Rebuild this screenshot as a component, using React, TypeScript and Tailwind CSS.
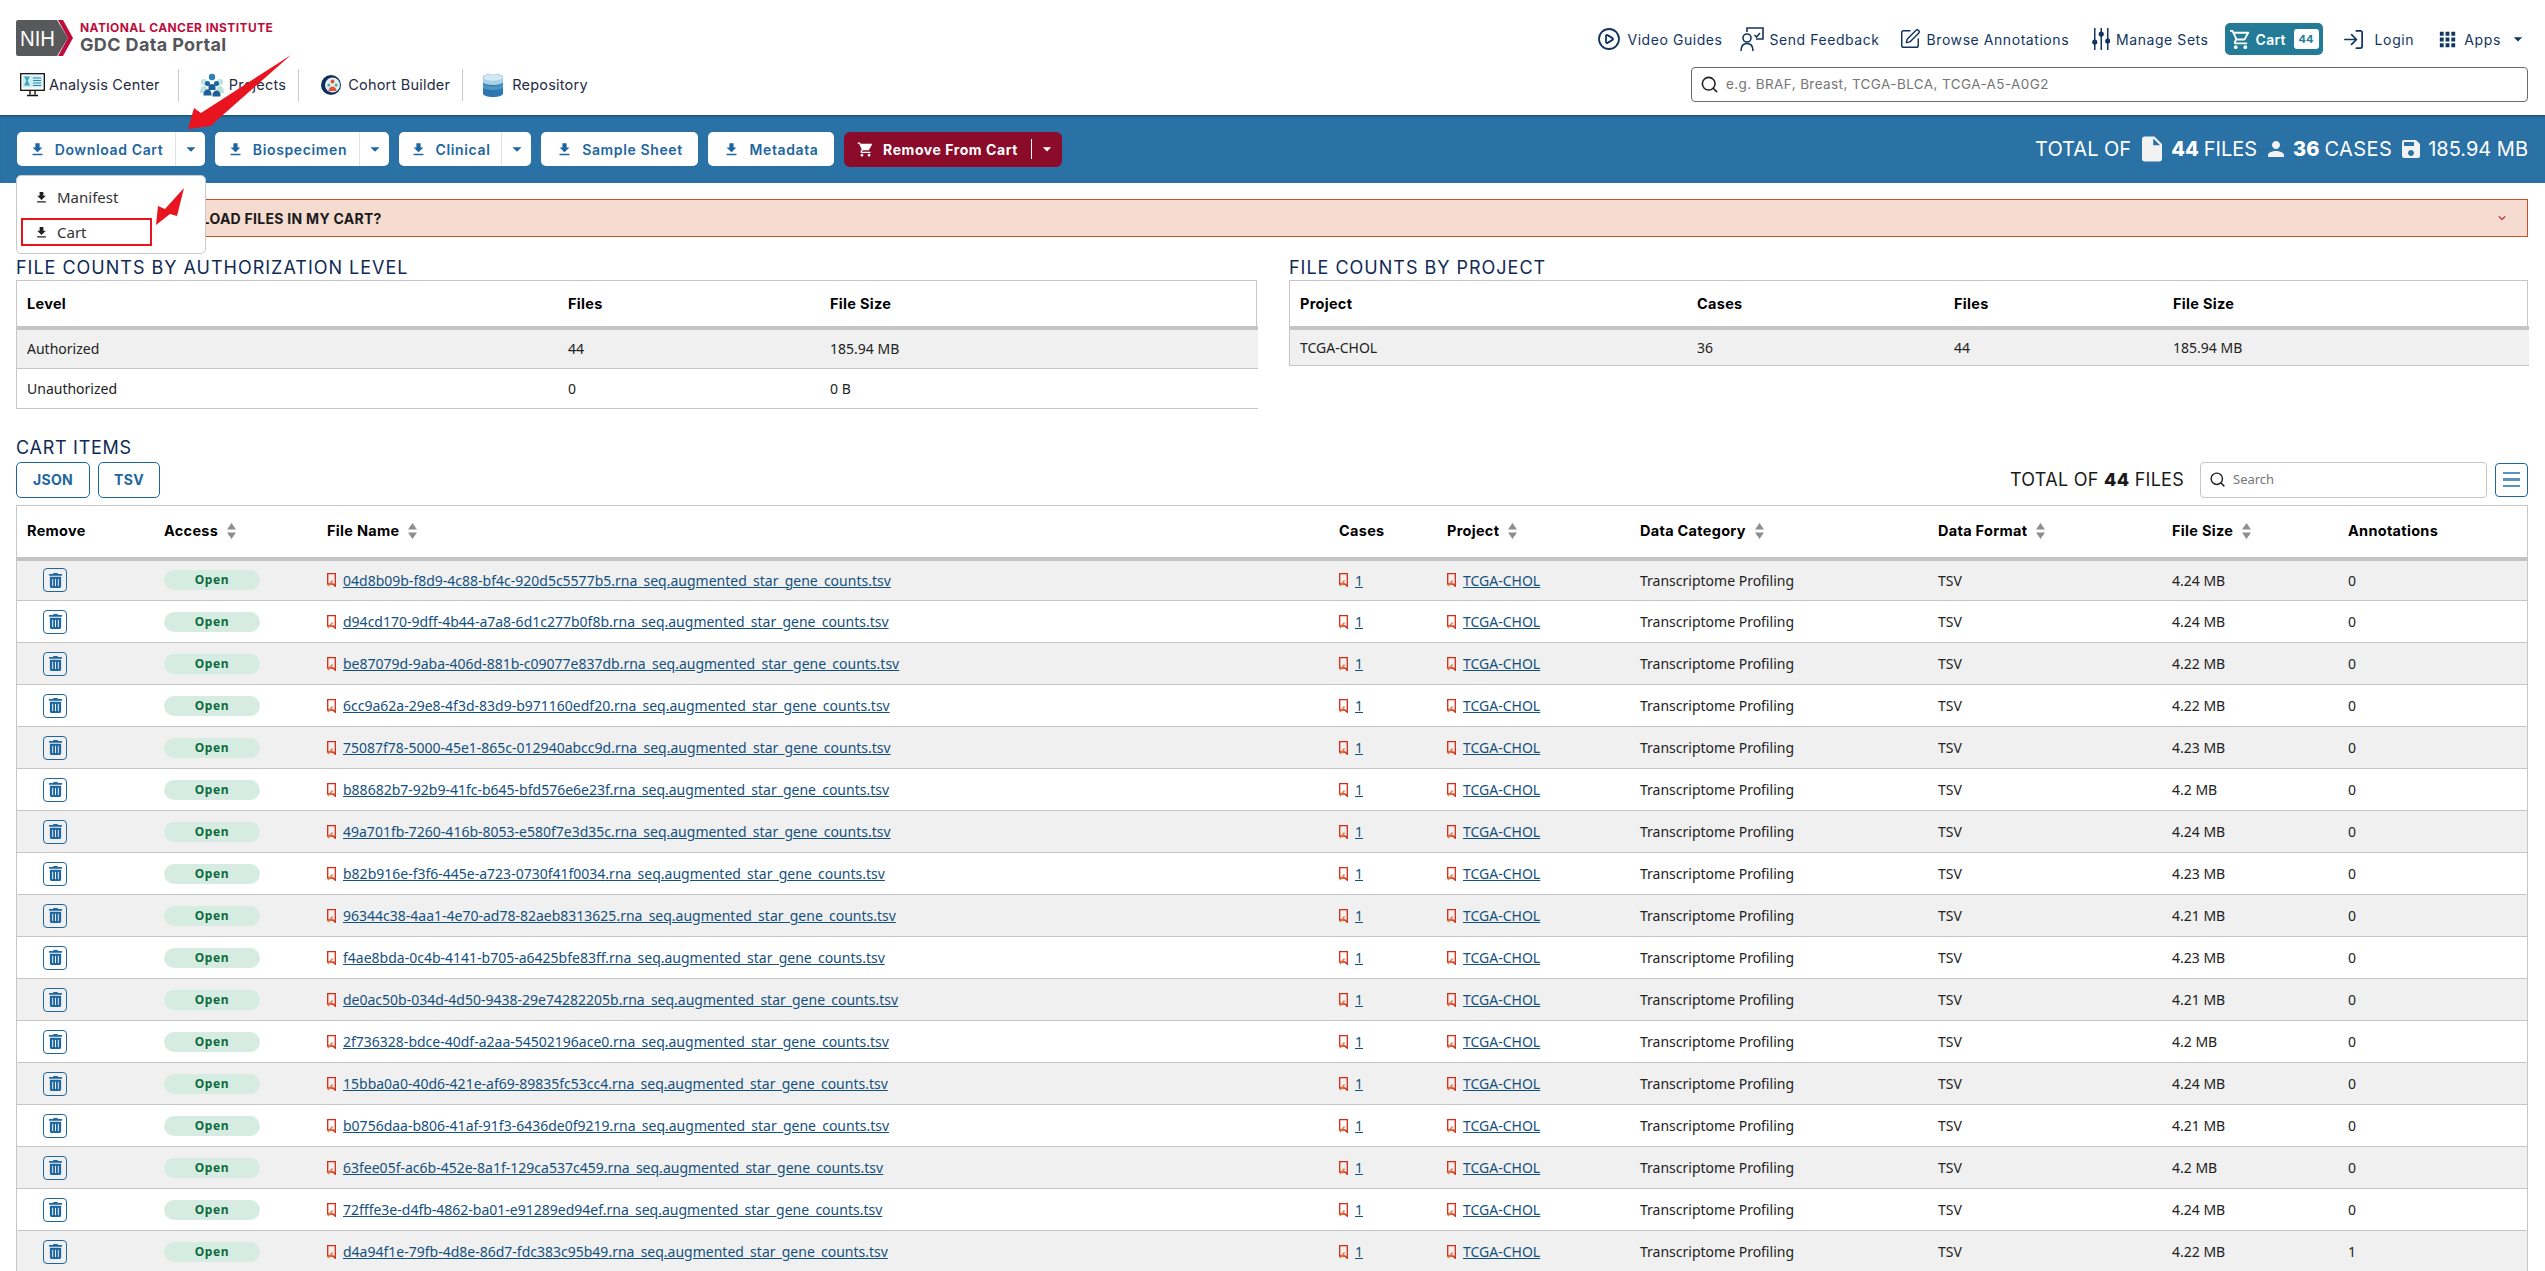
import React from "react";
import { Search, LogIn, SquarePen, CirclePlay } from "lucide-react";
import { MdFileDownload, MdArrowDropDown, MdInsertDriveFile, MdPerson, MdSave, MdApps, MdShoppingCart, MdOutlineShoppingCart, MdExpandMore } from "react-icons/md";
import { FaTrashAlt } from "react-icons/fa";

const HF = "font-['Inter',sans-serif]";

const rows: [string, string, string][] = [
  ["04d8b09b-f8d9-4c88-bf4c-920d5c5577b5", "4.24 MB", "0"],
  ["d94cd170-9dff-4b44-a7a8-6d1c277b0f8b", "4.24 MB", "0"],
  ["be87079d-9aba-406d-881b-c09077e837db", "4.22 MB", "0"],
  ["6cc9a62a-29e8-4f3d-83d9-b971160edf20", "4.22 MB", "0"],
  ["75087f78-5000-45e1-865c-012940abcc9d", "4.23 MB", "0"],
  ["b88682b7-92b9-41fc-b645-bfd576e6e23f", "4.2 MB", "0"],
  ["49a701fb-7260-416b-8053-e580f7e3d35c", "4.24 MB", "0"],
  ["b82b916e-f3f6-445e-a723-0730f41f0034", "4.23 MB", "0"],
  ["96344c38-4aa1-4e70-ad78-82aeb8313625", "4.21 MB", "0"],
  ["f4ae8bda-0c4b-4141-b705-a6425bfe83ff", "4.23 MB", "0"],
  ["de0ac50b-034d-4d50-9438-29e74282205b", "4.21 MB", "0"],
  ["2f736328-bdce-40df-a2aa-54502196ace0", "4.2 MB", "0"],
  ["15bba0a0-40d6-421e-af69-89835fc53cc4", "4.24 MB", "0"],
  ["b0756daa-b806-41af-91f3-6436de0f9219", "4.21 MB", "0"],
  ["63fee05f-ac6b-452e-8a1f-129ca537c459", "4.2 MB", "0"],
  ["72fffe3e-d4fb-4862-ba01-e91289ed94ef", "4.24 MB", "0"],
  ["d4a94f1e-79fb-4d8e-86d7-fdc383c95b49", "4.22 MB", "1"],
];

function NihLogo() {
  return (
    <svg width="57" height="36" viewBox="0 0 57 36" className="shrink-0">
      <path d="M2 0H41L52 18L41 36H2C1 36 0 35 0 34V2C0 1 1 0 2 0Z" fill="#58595b" />
      <path d="M42 0H47L57 18L47 36H42L52 18Z" fill="#bb0e3d" />
      <text x="4" y="26" fill="#fff" fontSize="22" fontFamily="Liberation Sans, sans-serif" textLength="35" lengthAdjust="spacingAndGlyphs">NIH</text>
    </svg>
  );
}

function AnalysisIcon() {
  return (
    <svg width="25" height="24" viewBox="0 0 25 24" className="shrink-0">
      <rect x="0.7" y="0.7" width="23.6" height="16.6" fill="#fff" stroke="#111" strokeWidth="1.3" />
      <rect x="2.5" y="2.5" width="20" height="12" fill="#cfeef0" />
      <path d="M4 3.5h6l-2.3 4.2L10 12.5H4l2.3-4.8Z" fill="#3aa4c4" />
      <path d="M13 5h8M13 7.5h8M13 10h8M13 12.5h8" stroke="#2e86b4" strokeWidth="1.2" />
      <path d="M10 17.5v4M15 17.5v4M7 22.5h11" stroke="#111" strokeWidth="1.4" />
    </svg>
  );
}

function ProjectsIcon() {
  return (
    <svg width="24" height="25" viewBox="0 0 24 25" className="shrink-0">
      <circle cx="4" cy="9" r="3" fill="#b9e4df" />
      <circle cx="20" cy="9" r="3" fill="#b9e4df" />
      <path d="M0 20c0-5 2-7 4-7s4 2 4 7ZM16 20c0-5 2-7 4-7s4 2 4 7Z" fill="#b9e4df" />
      <circle cx="12" cy="4" r="3.2" fill="#2d7fb5" />
      <circle cx="7.5" cy="10.5" r="2.6" fill="#1f6aa3" />
      <circle cx="16.5" cy="10.5" r="2.6" fill="#1f6aa3" />
      <path d="M8.5 14c0-4 7-4 7 0v3h-7ZM3.5 22c0-7 8-7 8-1v1.500h-8ZM12.500 22c0-6 8-6 8 0v1.500h-8Z" fill="#1b5f96" />
    </svg>
  );
}

function CohortIcon() {
  return (
    <svg width="20" height="20" viewBox="0 0 20 20" className="shrink-0">
      <circle cx="10" cy="10" r="10" fill="#0f2f5a" />
      <circle cx="11.500" cy="10" r="7.500" fill="#dff1f6" />
      <circle cx="11.500" cy="6.500" r="2" fill="#e5553b" />
      <circle cx="7.800" cy="10" r="1.500" fill="#4fae8e" />
      <circle cx="15.200" cy="10" r="1.500" fill="#4fae8e" />
      <path d="M7.500 16c0-6 8-6 8 0Z" fill="#e5553b" />
    </svg>
  );
}

function RepoIcon() {
  return (
    <svg width="20" height="23" viewBox="0 0 20 23" className="shrink-0">
      <path d="M0 3.500C0 1.500 4.500 0 10 0s10 1.500 10 3.500v16c0 2-4.500 3.500-10 3.500S0 21.500 0 19.500Z" fill="#2c77ad" />
      <path d="M0 3.500C0 1.500 4.500 0 10 0s10 1.500 10 3.500V8c0 2-4.500 3-10 3S0 10 0 8Z" fill="#a9d1e6" />
      <path d="M0 9c0 2 4.500 3 10 3s10-1 10-3v4c0 2-4.500 3-10 3S0 15 0 13Z" fill="#4d96c4" />
      <ellipse cx="10" cy="3.500" rx="9.500" ry="3.200" fill="#d2e8f2" />
    </svg>
  );
}

function FeedbackIcon() {
  return (
    <svg width="24" height="24" viewBox="0 0 24 24" fill="none" stroke="#12355f" strokeWidth="1.600" className="shrink-0">
      <circle cx="7" cy="11" r="4" />
      <path d="M1 24c0-5 2.500-7.500 6-7.500s6 2.500 6 7.500" />
      <path d="M7 5V1h16v11h-7" />
      <path d="m14.500 8 2 2 3.500-4" />
    </svg>
  );
}

function SetsIcon() {
  return (
    <svg width="18" height="22" viewBox="0 0 18 22" fill="#12355f" className="shrink-0">
      <rect x="2" y="0" width="1.500" height="22" />
      <rect x="8.500" y="0" width="1.500" height="22" />
      <rect x="15" y="0" width="1.500" height="22" />
      <circle cx="2.750" cy="14" r="2.600" />
      <circle cx="9.250" cy="6" r="2.600" />
      <circle cx="15.750" cy="13" r="2.600" />
    </svg>
  );
}

function SortIcon() {
  return (
    <svg width="9" height="16" viewBox="0 0 9 16" fill="#8f8f8f" className="ml-[9px] shrink-0">
      <path d="M4.500 0 9 6.500H0ZM4.500 16 0 9.500h9Z" />
    </svg>
  );
}

function DocMark() {
  return (
    <svg width="9" height="14" viewBox="0 0 9 14" fill="none" className="shrink-0">
      <path d="M.7.7h7.600v12.600L6 11H.7Z" stroke="#d42a12" strokeWidth="1.300" />
      <path d="M1 13 5.500 7.500" stroke="#e8743a" strokeWidth="1.400" />
    </svg>
  );
}

function Btn({ label, w, split }: { label: string; w: string; split?: boolean }) {
  return (
    <button className={`${w} h-[34px] flex items-center rounded-[5px] bg-white text-[#1d66a0] text-[14px] font-semibold ${HF}`}>
      <span className="flex-1 flex items-center justify-center gap-[9px] tracking-[0.045em]">
        <MdFileDownload size={17} color="#1d66a0" />
        {label}
      </span>
      {split && (
        <span className="h-full w-[30px] border-l border-[#e3e3e3] flex items-center justify-center">
          <MdArrowDropDown size={22} color="#1d66a0" />
        </span>
      )}
    </button>
  );
}

function NavTop({ icon, label, cls = "" }: { icon: React.ReactNode; label: string; cls?: string }) {
  return (
    <a className={`flex items-center gap-[6px] text-[14px] text-[#12355f] tracking-[0.04em] ${cls} ${HF}`}>
      {icon}
      {label}
    </a>
  );
}

function NavLow({ icon, label, gap }: { icon: React.ReactNode; label: string; gap: string }) {
  return (
    <a className={`flex items-center ${gap} text-[14.5px] text-[#1f2a44] tracking-[0.015em] ${HF}`}>
      {icon}
      {label}
    </a>
  );
}

function Th({ children, sort }: { children: React.ReactNode; sort?: boolean }) {
  return (
    <th className="px-[10px] text-left font-normal">
      <span className={`flex items-center text-[14.500px] font-bold text-black tracking-[0.02em] ${HF}`}>
        {children}
        {sort && <SortIcon />}
      </span>
    </th>
  );
}

function SummaryTable({ heads, rowsData, cols, rowH }: { heads: string[]; rowsData: string[][]; cols: string[]; rowH: string }) {
  return (
    <div className="border border-[#c6c6c6] border-b-0">
      <table className="w-full table-fixed border-collapse">
        <colgroup>
          {cols.map((c) => (
            <col key={c} className={c} />
          ))}
        </colgroup>
        <thead>
          <tr className="h-[47px] border-b-4 border-[#c4c4c4]">
            {heads.map((h) => (
              <Th key={h}>{h}</Th>
            ))}
          </tr>
        </thead>
        <tbody>
          {rowsData.map((r, i) => (
            <tr key={i} className={`${rowH} border-b border-[#c6c6c6] ${i % 2 === 0 ? "bg-[#f0f0f0]" : "bg-white"}`}>
              {r.map((c, j) => (
                <td key={j} className="px-[10px] text-[14px] text-[#222]">
                  {c}
                </td>
              ))}
            </tr>
          ))}
        </tbody>
      </table>
    </div>
  );
}

function CartRow({ name, size, ann, odd }: { name: string; size: string; ann: string; odd: boolean }) {
  return (
    <tr className={`h-[42px] border-b border-[#c6c6c6] text-[14px] text-[#222] ${odd ? "bg-[#f0f0f0]" : "bg-white"}`}>
      <td className="pl-[26px]">
        <button className="w-[24px] h-[24px] rounded-[4px] border border-[#1d66a0] flex items-center justify-center">
          <FaTrashAlt size={15} color="#1d66a0" />
        </button>
      </td>
      <td className="px-[10px]">
        <span className="w-[96px] h-[20px] rounded-full bg-[#d6ece3] flex items-center justify-center text-[12px] font-bold tracking-[0.05em] text-[#0b6b3b]">
          Open
        </span>
      </td>
      <td className="px-[10px]">
        <span className="flex items-center gap-[7px]">
          <DocMark />
          <a className="underline text-[#14507e]">{name}.rna_seq.augmented_star_gene_counts.tsv</a>
        </span>
      </td>
      <td className="px-[10px]">
        <span className="flex items-center gap-[7px]">
          <DocMark />
          <a className="underline text-[#14507e]">1</a>
        </span>
      </td>
      <td className="px-[10px]">
        <span className="flex items-center gap-[7px]">
          <DocMark />
          <a className="underline text-[#14507e]">TCGA-CHOL</a>
        </span>
      </td>
      <td className="px-[10px]">Transcriptome Profiling</td>
      <td className="px-[10px]">TSV</td>
      <td className="px-[10px]">{size}</td>
      <td className="px-[10px]">{ann}</td>
    </tr>
  );
}

export default function App() {
  return (
    <div className="relative h-[1271px] overflow-hidden bg-white font-['Noto_Sans',sans-serif]">
      <header className="h-[115px] flex justify-between pl-[16px] pr-[17px]">
        <div className="flex flex-col">
          <div className="flex items-center gap-[7px] pt-[20px]">
            <NihLogo />
            <div className={`flex flex-col ${HF}`}>
              <span className="text-[12px] leading-[14px] font-bold tracking-[0.035em] text-[#bb0e3d]">NATIONAL CANCER INSTITUTE</span>
              <span className="text-[18px] leading-[20px] font-bold tracking-[0.02em] text-[#55565a]">GDC Data Portal</span>
            </div>
          </div>
          <nav className="flex items-center h-[32px] mt-[13px] pl-[4px]">
            <NavLow icon={<AnalysisIcon />} label="Analysis Center" gap="gap-[4px]" />
            <span className="w-px h-[32px] bg-[#c9c9c9] ml-[18px] mr-[21px]" />
            <NavLow icon={<ProjectsIcon />} label="Projects" gap="gap-[5px]" />
            <span className="w-px h-[32px] bg-[#c9c9c9] ml-[12px] mr-[22px]" />
            <NavLow icon={<CohortIcon />} label="Cohort Builder" gap="gap-[7px]" />
            <span className="w-px h-[32px] bg-[#c9c9c9] ml-[12px] mr-[20px]" />
            <NavLow icon={<RepoIcon />} label="Repository" gap="gap-[9px]" />
          </nav>
        </div>
        <div className="flex flex-col items-end">
          <div className="flex items-center h-[32px] mt-[23px]">
            <div className="flex items-center gap-[19px]">
              <NavTop icon={<CirclePlay size={24} color="#12355f" strokeWidth={1.800} />} label="Video Guides" />
              <NavTop icon={<FeedbackIcon />} label="Send Feedback" cls="ml-[-2px]" />
              <NavTop icon={<SquarePen size={22} color="#12355f" strokeWidth={1.600} />} label="Browse Annotations" />
              <NavTop icon={<SetsIcon />} label="Manage Sets" cls="ml-[4px]" />
            </div>
            <a className={`ml-[16px] w-[98px] h-[32px] rounded-[5px] bg-[#237b98] flex items-center pl-[4px] text-white text-[14px] font-semibold ${HF}`}>
              <MdOutlineShoppingCart size={23} color="#fff" />
              <span className="ml-[4px] tracking-[0.02em]">Cart</span>
              <span className="ml-auto mr-[4px] w-[25px] h-[20px] bg-white rounded-[3px] text-[#237b98] text-[11px] font-bold flex items-center justify-center">44</span>
            </a>
            <a className={`ml-[19px] flex items-center gap-[10px] text-[14px] text-[#12355f] tracking-[0.045em] ${HF}`}>
              <LogIn size={23} color="#12355f" strokeWidth={1.800} />
              Login
            </a>
            <a className={`ml-[22px] flex items-center gap-[5px] text-[14px] text-[#12355f] tracking-[0.045em] ${HF}`}>
              <MdApps size={23} color="#12355f" />
              Apps
              <MdArrowDropDown size={20} color="#12355f" className="ml-[2px]" />
            </a>
          </div>
          <div className="mt-[12px] w-[837px] h-[35px] rounded-[4px] border border-[#6b6b6b] flex items-center pl-[8px] gap-[7px]">
            <Search size={19} color="#222" strokeWidth={2} />
            <span className={`text-[13.500px] text-[#757575] tracking-[0.03em] ${HF}`}>e.g. BRAF, Breast, TCGA-BLCA, TCGA-A5-A0G2</span>
          </div>
        </div>
      </header>

      <div className="h-[68px] bg-[#2a71a5] shadow-[inset_0_3px_3px_-2px_rgba(0,0,0,0.35)] flex items-center justify-between pl-[17px] pr-[17px]">
        <div className="flex items-center gap-[10px]">
          <Btn label="Download Cart" w="w-[188px]" split />
          <Btn label="Biospecimen" w="w-[174px]" split />
          <Btn label="Clinical" w="w-[132px]" split />
          <Btn label="Sample Sheet" w="w-[157px]" />
          <Btn label="Metadata" w="w-[126px]" />
          <button className={`w-[218px] h-[35px] flex items-center rounded-[6px] bg-[#8a0c2a] text-white text-[14px] font-bold ${HF}`}>
            <span className="flex-1 flex items-center justify-center gap-[9px] tracking-[0.04em]">
              <MdShoppingCart size={17} color="#fff" />
              Remove From Cart
            </span>
            <span className="h-[20px] w-[31px] border-l border-white flex items-center justify-center">
              <MdArrowDropDown size={20} color="#fff" />
            </span>
          </button>
        </div>
        <div className={`flex items-center text-white text-[20px] ${HF}`}>
          <span>TOTAL OF</span>
          <MdInsertDriveFile size={30} color="#f2f2f2" className="ml-[6px]" />
          <b className="ml-[4px] font-extrabold">44</b>
          <span className="ml-[5px]">FILES</span>
          <MdPerson size={24} color="#f2f2f2" className="ml-[7px]" />
          <b className="ml-[5px] font-extrabold">36</b>
          <span className="ml-[5px] tracking-[0.02em]">CASES</span>
          <MdSave size={24} color="#f2f2f2" className="ml-[7px]" />
          <span className="ml-[5px]">185.94 MB</span>
        </div>
      </div>

      <div className="pl-[16px] pr-[17px]">
        <div className="mt-[16px] h-[38px] bg-[#f5dbd0] border border-[#c8502a] flex items-center justify-between pl-[65px] pr-[18px]">
          <span className={`text-[14px] font-bold text-[#1a1a1a] tracking-[0.02em] ${HF}`}>HOW DO I DOWNLOAD FILES IN MY CART?</span>
          <MdExpandMore size={14} color="#c01f1f" />
        </div>

        <div className="grid grid-cols-[1241px_1239px] gap-[32px] mt-[18px]">
          <div>
            <h2 className={`text-[18px] leading-[25px] text-[#0f2a54] tracking-[0.055em] ${HF}`}>FILE COUNTS BY AUTHORIZATION LEVEL</h2>
            <SummaryTable
              heads={["Level", "Files", "File Size"]}
              cols={["w-[541px]", "w-[262px]", "w-[438px]"]}
              rowH="h-[40px]"
              rowsData={[["Authorized", "44", "185.94 MB"], ["Unauthorized", "0", "0 B"]]}
            />
          </div>
          <div>
            <h2 className={`text-[18px] leading-[25px] text-[#0f2a54] tracking-[0.055em] ${HF}`}>FILE COUNTS BY PROJECT</h2>
            <SummaryTable
              heads={["Project", "Cases", "Files", "File Size"]}
              cols={["w-[397px]", "w-[257px]", "w-[219px]", "w-[366px]"]}
              rowH="h-[37px]"
              rowsData={[["TCGA-CHOL", "36", "44", "185.94 MB"]]}
            />
          </div>
        </div>

        <h2 className={`mt-[26px] text-[18px] leading-[25px] text-[#0f2a54] tracking-[0.04em] ${HF}`}>CART ITEMS</h2>
        <div className="flex items-center justify-between mt-[2px]">
          <div className={`flex gap-[8px] text-[14px] font-bold text-[#1d66a0] tracking-[0.02em] ${HF}`}>
            <button className="w-[74px] h-[36px] rounded-[5px] border border-[#1d66a0]">JSON</button>
            <button className="w-[62px] h-[36px] rounded-[5px] border border-[#1d66a0]">TSV</button>
          </div>
          <div className="flex items-center">
            <span className={`text-[18px] text-[#1a1a1a] tracking-[0.015em] ${HF}`}>
              TOTAL OF <b className="font-extrabold">44</b> FILES
            </span>
            <div className="ml-[16px] w-[287px] h-[36px] rounded-[4px] border border-[#c6c6c6] flex items-center pl-[8px] gap-[7px]">
              <Search size={17} color="#222" strokeWidth={2} />
              <span className="text-[13px] text-[#767676]">Search</span>
            </div>
            <button className="ml-[8px] w-[33px] h-[34px] rounded-[4px] border border-[#1d66a0] flex flex-col items-center justify-center gap-[4px]">
              <span className="w-[17px] h-[2.500px] bg-[#5a93bb]" />
              <span className="w-[17px] h-[2.500px] bg-[#5a93bb]" />
              <span className="w-[17px] h-[2.500px] bg-[#5a93bb]" />
            </button>
          </div>
        </div>

        <div className="mt-[7px] border border-[#c6c6c6] border-b-0">
          <table className="w-full table-fixed border-collapse">
            <colgroup>
              <col className="w-[137px]" />
              <col className="w-[163px]" />
              <col className="w-[1012px]" />
              <col className="w-[108px]" />
              <col className="w-[193px]" />
              <col className="w-[298px]" />
              <col className="w-[234px]" />
              <col className="w-[176px]" />
              <col className="w-[189px]" />
            </colgroup>
            <thead>
              <tr className="h-[53px] border-b-4 border-[#c4c4c4]">
                <Th>Remove</Th>
                <Th sort>Access</Th>
                <Th sort>File Name</Th>
                <Th>Cases</Th>
                <Th sort>Project</Th>
                <Th sort>Data Category</Th>
                <Th sort>Data Format</Th>
                <Th sort>File Size</Th>
                <Th>Annotations</Th>
              </tr>
            </thead>
            <tbody>
              {rows.map((r, i) => (
                <CartRow key={r[0]} name={r[0]} size={r[1]} ann={r[2]} odd={i % 2 === 0} />
              ))}
            </tbody>
          </table>
        </div>
      </div>

      <div className="absolute left-[16px] top-[175px] w-[190px] h-[79px] bg-white border border-[#c9c9c9] rounded-[5px] text-[15px] text-[#333] pl-[17px]">
        <div className="flex items-center gap-[8px] h-[20px] mt-[11px]">
          <MdFileDownload size={15} color="#222" />
          Manifest
        </div>
        <div className="flex items-center gap-[8px] h-[20px] mt-[15px]">
          <MdFileDownload size={15} color="#222" />
          Cart
        </div>
      </div>
      <div className="absolute left-[21px] top-[218px] w-[131px] h-[28px] border-2 border-[#e8141f]" />
      <svg className="absolute left-0 top-0 pointer-events-none" width="320" height="260" viewBox="0 0 320 260">
        <path d="M291 55 L216 121 L211 126 L188 129 L194 108 L201 113 Z" fill="#e8141f" />
        <path d="M184 188 L177 216 L170 214 L156 225 L158 206 L165 209 Z" fill="#e8141f" />
      </svg>
    </div>
  );
}
